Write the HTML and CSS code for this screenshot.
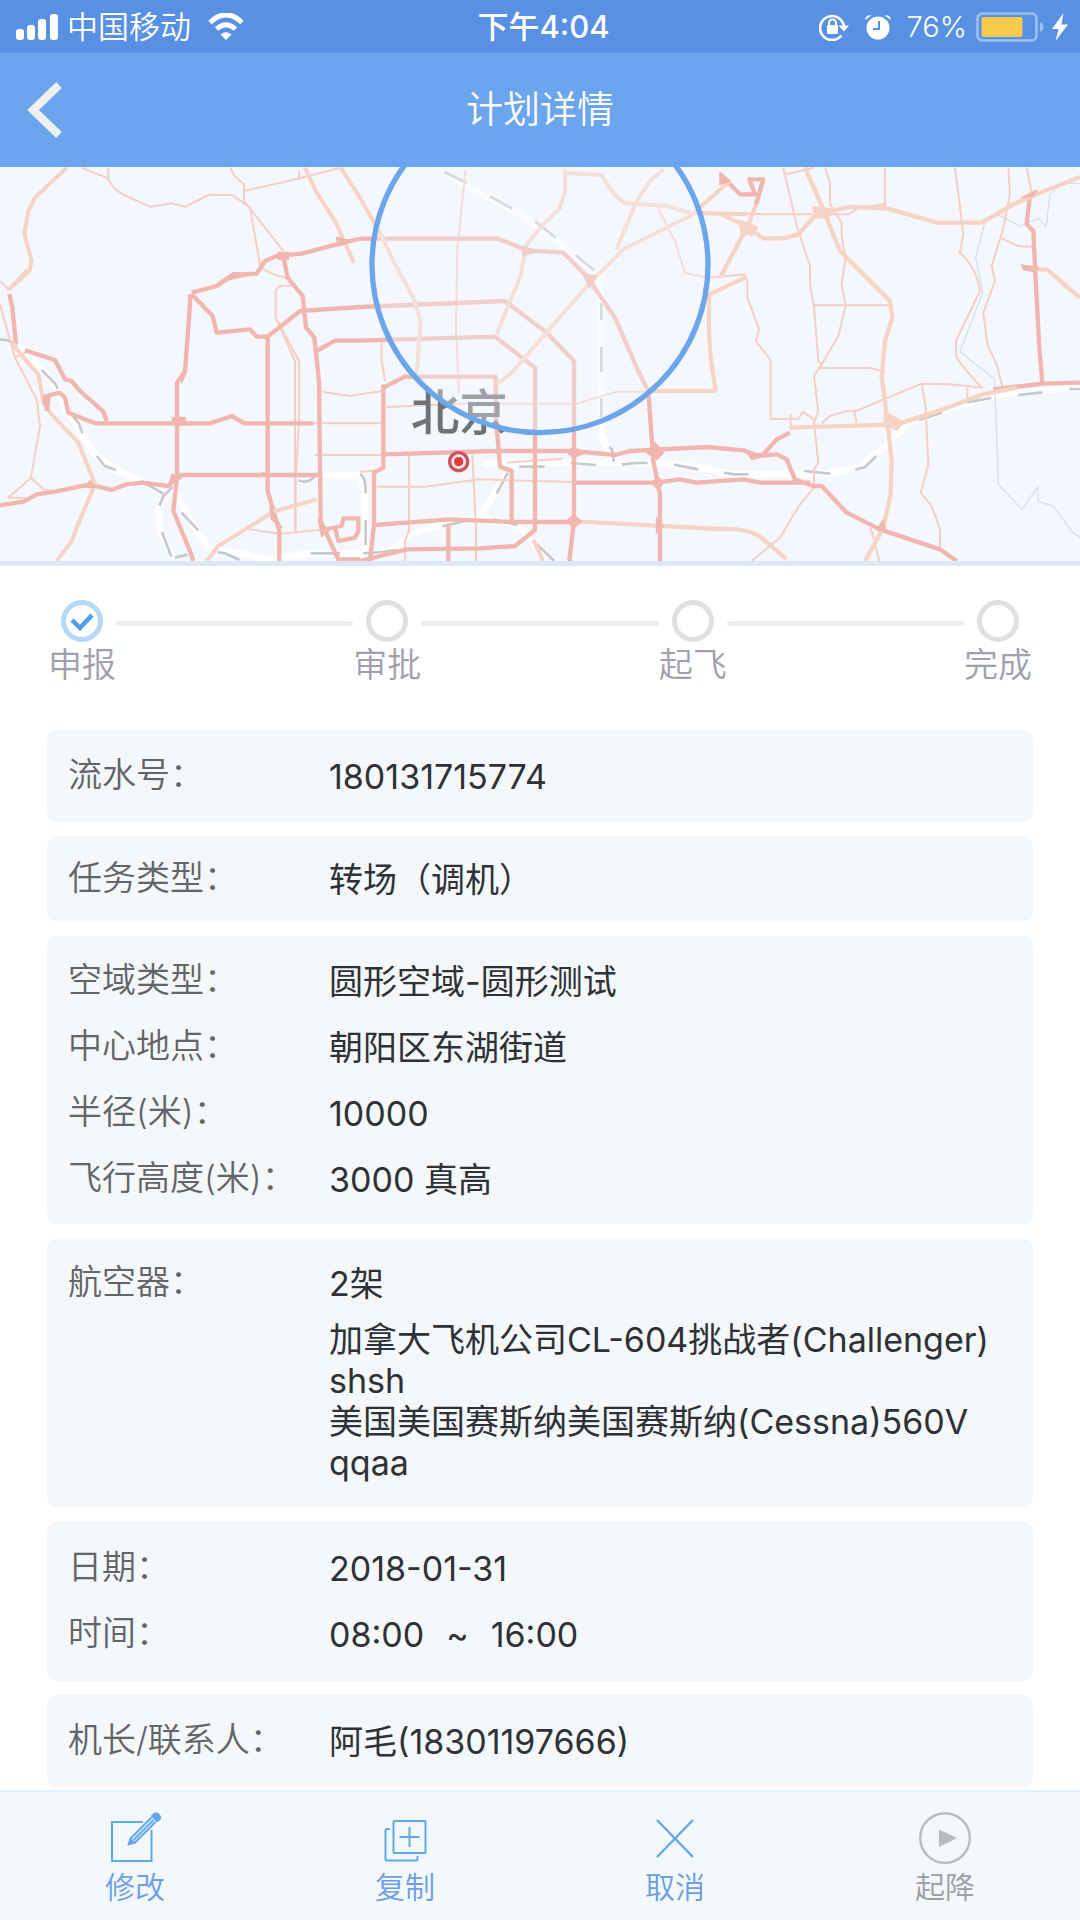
FILE: index.html
```html
<!DOCTYPE html>
<html lang="zh-CN">
<head>
<meta charset="utf-8">
<meta name="viewport" content="width=device-width, initial-scale=1">
<title>计划详情</title>
<link rel="stylesheet" href="styles.css">
</head>
<body>
<div class="status-bar">
  <div class="status-left">
    <svg class="signal" viewBox="0 0 42 26" width="42" height="26" fill="#fff" aria-hidden="true">
      <rect x="0" y="15" width="8" height="11" rx="3"/><rect x="11" y="11" width="8" height="15" rx="3"/><rect x="22" y="5" width="8" height="21" rx="3"/><rect x="34" y="0" width="8" height="26" rx="3"/>
    </svg>
    <span class="carrier">中国移动</span>
    <svg class="wifi" viewBox="0 0 36 27" width="36" height="27" aria-hidden="true">
      <path d="M2 9.500Q18-6 34 9.500M8.500 16Q18 7.500 27.500 16" fill="none" stroke="#fff" stroke-width="5"/>
      <path d="M18 27L12.500 21.500Q18 17 23.500 21.500Z" fill="#fff"/>
    </svg>
  </div>
  <time class="clock">下午4:04</time>
  <div class="status-right">
    <svg viewBox="0 0 30 28" width="30" height="28" aria-hidden="true">
      <path d="M22.500 22.500A12 12 0 1 1 25 14" fill="none" stroke="#fff" stroke-width="2.600"/>
      <path d="M19.500 12.500H30L25 18.500Z" fill="#fff"/>
      <rect x="8" y="12" width="11" height="9" rx="1" fill="#fff"/>
      <path d="M10 12.500V10a3.500 3.500 0 0 1 7 0v2.500" fill="none" stroke="#fff" stroke-width="2"/>
    </svg>
    <svg class="alarm" viewBox="0 0 26 26" width="26" height="26" aria-hidden="true">
      <circle cx="13" cy="14" r="11.500" fill="#fff"/>
      <path d="M0 6Q1 0 6.500 1.500ZM26 6Q25 0 19.500 1.500Z" fill="#fff"/>
      <path d="M14 7V15H8" fill="none" stroke="#5890e4" stroke-width="2"/>
    </svg>
    <span class="percent">76%</span>
    <svg viewBox="0 0 68 30" width="68" height="30" aria-hidden="true">
      <rect x="1.500" y="1.500" width="59" height="27" rx="5" fill="none" stroke="#9dc0f3" stroke-width="2.600"/>
      <rect x="5.500" y="5" width="41" height="20" rx="2" fill="#f6cb4b"/>
      <path d="M64 10Q67.500 11 67.500 15T64 20Z" fill="#9dc0f3"/>
    </svg>
    <svg class="bolt" viewBox="0 0 16 28" width="16" height="28" aria-hidden="true"><path d="M11.500 0L0 16H6.500L3.500 28L16 11.500H9.500Z" fill="#fff"/></svg>
  </div>
</div>

<header class="title-bar">
  <button class="back" type="button" aria-label="返回">
    <svg viewBox="0 0 36 56" width="36" height="56" aria-hidden="true"><path d="M32 3L6 28L32 53" fill="none" stroke="#f0f0f0" stroke-width="8"/></svg>
  </button>
  <h1 class="title">计划详情</h1>
</header>

<main class="content">
  <svg class="map" viewBox="0 18 3240 1182" role="img" aria-label="北京地图">
    <!-- railways -->
    <g class="rail-bed">
      <path d="M60 560L130 630L175 690L200 750L240 810L290 885L345 925L430 965L500 1000L475 1040L480 1110L520 1195M520 980L560 1060L630 1165L690 1170L800 1195L930 1177L1100 1177L1180 1165L1230 1120L1330 1090L1440 1065L1525 930M960 942H1080L1095 990V1180"/>
      <path d="M1330 35L1540 150L1660 230L1790 340L1803 420V820L1840 900M1450 905H1900L2040 910L2200 940L2480 938L2570 920L2640 870L2720 790L2860 740L3000 700L3240 680M1450 1070L1560 1095L1640 1195"/>
    </g>
    <g class="rail">
      <path d="M0 535L25 538L50 552M125 627L165 667L173 683M205 750L235 785L248 817M290 885L315 915L348 927M423 960L490 998M518 978L490 1005L478 1035M545 1055L595 1108M486 1113L514 1187M525 1190L563 1181M652 1173L675 1177L718 1196M745 941H795M590 941H665M895 958Q925 970 945 945M932 1177H1020"/>
      <path d="M1333 33L1400 66M1470 106L1537 143M1606 182L1667 230M1727 282L1782 328M1804 425V478M1804 558V633M1804 712V770M1828 858Q1841 865 1841 902M1558 917H1634M1712 906L1787 912M1866 911Q1900 904 1943 906M2022 911L2095 925M1524 935L1490 998M1080 940Q1097 945 1097 997M1097 1077V1152M1090 1177Q1140 1175 1190 1167M1327 1096L1395 1080M1480 1075L1552 1092M1610 1150L1663 1200"/>
      <path d="M2172 935L2200 940H2246M2413 930L2490 938M2566 926L2595 918L2629 885M2756 778L2825 755M2900 724L2974 711M3053 702L3128 694M3208 684H3240"/>
    </g>
    <!-- rivers -->
    <path class="river" d="M3240 68L3190 65L3150 100L3138 197L3115 172L3060 195L2990 160L2955 180L2927 290L2948 395L2880 572L2984 655L2995 970L3066 1046L3113 978L3115 1022L3160 1035L3215 1110L3240 1130"/>
    <!-- minor roads -->
    <g class="minor">
      <path d="M245 20L325 52L332 68Q350 95 395 112L450 137L515 127L557 137L625 102H697L750 140L780 310Q790 335 858 350M325 20V60M692 20Q697 45 732 70V120L850 270M732 90L900 52L1020 20M897 30V55M0 360L25 385L80 325M0 430L45 590L110 715L120 795L105 880L93 950L25 1010H75M93 950L130 985L160 990M45 590L75 575M885 374H845Q827 377 827 400V470L885 600V1110M833 480L897 600V780L887 960V1110M967 692L1050 705L1080 700M905 787H1080M945 882H1080M735 1103L840 1118L960 1107"/>
      <path d="M1080 700L1148 690M1080 787H1148M1080 882H1155M1080 932L1140 928M1145 530V600L1155 660M1160 738L1350 730L1380 728H1730L1850 692H1950M1130 977H1275L1440 955L1720 963M1227 885V1110L1215 1140V1200M1417 880L1428 1100V1200M1522 905L1688 893M1397 25L1372 260L1368 500L1377 695M1975 145L2025 240L2055 337L2130 350L2235 340L2242 360V410L2277 505L2267 540L2312 598V774H2395L2408 752L2442 775"/>
      <path d="M2350 20L2392 200L2430 315V370L2442 440L2455 600L2465 610L2442 645L2455 750L2442 785L2455 905L2442 925V970M2350 42L2440 20M2475 20L2490 65V130L2525 185V225L2537 290L2525 370L2537 435L2515 525L2465 610M2442 433H2680M2455 621H2610L2655 633M2655 20V142M2200 155L2290 160H2545L2575 142L2660 128M2865 20L2885 180L2890 220L2880 275Q2930 320 2940 390L2868 540V580Q2870 600 2945 680M3025 20L3030 100L3010 200L2975 315L2985 360L2950 455L2962 550L2990 610L3008 680M3080 20L3095 95M3005 232L3055 255L3100 257M2465 787L2490 765L2540 750H2570L2650 715L2765 668L2850 670L2950 680M2765 668L2777 740L2785 910L2762 995L2795 1035L2820 1105V1165M2902 680V720M2562 750L2570 785M2372 760V805M2442 980L2400 1030L2340 1130L2255 1200M2612 1100L2638 1200"/>
    </g>
    <!-- expressways -->
    <g class="major">
      <path d="M570 400V430L555 630L531 665V950L520 1050L570 1170L580 1200M575 395L650 375L700 342L770 338L795 300L830 285L905 278L1010 250L1080 233M850 285L863 350L908 405L918 500L943 530L957 660L962 1080L1015 1195H1080M575 400L638 465L650 515L750 505L770 527H803L900 450L1080 438M803 527V990L838 1110V1200M950 570L1005 539H1080M75 568L165 597L195 655L215 660L240 690L310 752L320 780M140 750V705L180 695L195 710L205 755L285 787H630L695 765L733 787H940M0 1033L70 1022L110 1000L165 992L270 970L335 987L380 970L425 965L505 975L535 942H960M28 400L37 440L48 550M965 1107L1025 1095L1030 1072H1075V1110L1065 1130L1015 1140L1005 1100"/>
      <path d="M1080 233H1495L1580 268L1690 275L1760 345L1845 470L1910 620L1945 690L1960 900L1980 1000V1200M1080 438L1515 420L1640 515L1722 600V1080L1708 1200M1080 539L1485 527L1605 620V1107L1545 1155L1440 1162L1220 1165L1080 1200M1150 680L1215 647H1487V760L1500 917L1535 930V1080M1150 670V920L1122 935V1090L1110 1200M1122 1092L1350 1075L1535 1083H1720M1155 880L1480 870H1720L1845 882L1890 870L2120 858L2230 868L2275 885L2330 880L2360 895L2385 955L2440 975H2465L2540 1055L2640 1105L2820 1165L2870 1200M1720 965H1970L2040 955L2090 965L2230 955L2280 965H2430M1345 1090V1200"/>
      <path d="M2260 885L2290 880L2330 835L2370 815M3090 100L3080 190L3100 210L3105 320L3118 560L3127 667M2980 685L3130 668L3240 665M2160 40L2185 65L2220 100H2265L2248 55H2290L2268 130"/>
    </g>
    <!-- secondary roads -->
    <g class="secondary">
      <path d="M200 20L105 110L85 150L73 220L95 300L88 330L27 385M38 545L50 565L115 640L130 720L150 755L235 845L285 970L230 1100L215 1140L170 1200M915 20L950 95L1005 180L1062 305M1022 20L1080 110M620 1200L655 1155L825 1050L950 1015"/>
      <path d="M1080 110L1145 225L1180 300L1240 410L1262 480L1250 640M1695 25V90L1680 140L1630 190L1580 250L1560 350L1530 420L1490 520M1695 35L1805 42Q1850 120 1880 127L2000 135L2070 155L2240 160M1490 670L1535 635L1770 365L1870 265L2070 165L2190 60M1850 265L1910 120L1950 60L1990 25M2268 130L2240 205M2235 350L2128 400L2127 460Q2125 580 2148 690M1940 690H2150M1600 1137L1630 1200"/>
      <path class="wide" d="M2160 157L2245 200L2290 232H2350L2395 220L2450 158L2550 138L2660 142L2810 185H2945L3040 130L3120 95L3240 48M2415 20L2470 145L2520 270L2670 420L2677 470L2655 540L2645 650L2660 760L2675 900L2672 1000L2650 1100L2595 1200M2240 200L2160 350M2370 800L2690 790L2830 745L2950 700L3050 680M3105 325H3140L3240 410M1740 1082L2160 1104Q2250 1100 2290 1135L2360 1195"/>
    </g>
    <g class="junction">
      <path d="M835 275H865V295H835ZM1010 230L1055 240L1015 255ZM518 770H555V792H518ZM790 935L815 945H785ZM555 625L545 665L560 630ZM270 960L290 980L255 978ZM515 940L545 950L510 970ZM810 1040L845 1100L815 1075ZM955 1075L985 1110L965 1125ZM655 365L700 335L765 338L700 352ZM130 705L150 700L145 750L130 730Z"/>
      <path d="M1720 860L1755 875L1720 890L1700 873ZM1965 845L1990 875L1970 895L1940 875ZM1720 1062L1745 1082L1720 1100L1700 1080ZM1975 950L1990 965L1975 985L1955 965ZM1970 1070L1990 1095L1970 1115ZM2240 870L2290 885L2255 895ZM1750 340L1790 345L1770 380ZM1565 255L1610 272L1570 283ZM2650 1078L2655 1110L2630 1105ZM3065 312L3115 320L3105 332L3070 325ZM3065 110L3110 88L3100 105ZM2160 35L2190 60L2160 70Z"/>
    </g>
    <path class="interchange" d="M2220 180L2270 200L2255 222L2225 215ZM2440 140L2490 145L2485 170L2450 168ZM2655 755L2710 785L2690 805L2655 790Z"/>
    <text class="city" x="1232" y="808">北京</text>
    <circle cx="1376" cy="902" r="27" fill="#f9e9ec" stroke="#c9555d" stroke-width="10"/>
    <circle cx="1376" cy="902" r="14" fill="#e03c40"/>
    <circle class="airspace" cx="1620" cy="311" r="504"/>
  </svg>

  <ol class="steps">
    <li class="step">
      <svg viewBox="0 0 42 42" width="42" height="42" aria-hidden="true"><circle cx="21" cy="21" r="18.500" fill="#fff" stroke="#b3d8f8" stroke-width="5"/><path d="M11 20L19 28L31 15" fill="none" stroke="#4fa0ea" stroke-width="4.500"/></svg>
      <span>申报</span>
    </li>
    <li class="track" aria-hidden="true"></li>
    <li class="step"><i class="dot"></i><span>审批</span></li>
    <li class="track" aria-hidden="true"></li>
    <li class="step"><i class="dot"></i><span>起飞</span></li>
    <li class="track" aria-hidden="true"></li>
    <li class="step"><i class="dot"></i><span>完成</span></li>
  </ol>

  <div class="cards">
    <dl class="card">
      <div class="row"><dt>流水号：</dt><dd>180131715774</dd></div>
    </dl>
    <dl class="card card-compact">
      <div class="row"><dt>任务类型：</dt><dd>转场（调机）</dd></div>
    </dl>
    <dl class="card card-group">
      <div class="row"><dt>空域类型：</dt><dd>圆形空域-圆形测试</dd></div>
      <div class="row"><dt>中心地点：</dt><dd>朝阳区东湖街道</dd></div>
      <div class="row"><dt>半径(米)：</dt><dd>10000</dd></div>
      <div class="row"><dt>飞行高度(米)：</dt><dd>3000 真高</dd></div>
    </dl>
    <dl class="card card-group">
      <div class="row"><dt>航空器：</dt><dd>2架</dd>
        <dd class="aircraft">加拿大飞机公司CL-604挑战者(Challenger)<br>shsh<br>美国美国赛斯纳美国赛斯纳(Cessna)560V<br>qqaa</dd></div>
    </dl>
    <dl class="card card-schedule">
      <div class="row"><dt>日期：</dt><dd>2018-01-31</dd></div>
      <div class="row"><dt>时间：</dt><dd class="period"><span>08:00</span><span>~</span><span>16:00</span></dd></div>
    </dl>
    <dl class="card">
      <div class="row"><dt>机长/联系人：</dt><dd>阿毛(18301197666)</dd></div>
    </dl>
  </div>
</main>

<nav class="actions">
  <button class="action" type="button">
    <svg viewBox="0 0 52 52" width="52" height="52" fill="none" stroke="#5fa8ea" stroke-width="2" aria-hidden="true">
      <path d="M34 10H3V49H42.500V18"/><path d="M42.500 5.500L22 26L20 32L26 30.500L46.500 10M24.500 28L44.500 8"/><path d="M20 32L21.500 27L25 30.500Z" fill="#5fa8ea"/><path d="M43 4Q47-1 50 3T48 9Z" fill="#5fa8ea"/>
    </svg>
    <span>修改</span>
  </button>
  <button class="action" type="button">
    <svg viewBox="0 0 52 52" width="52" height="52" fill="none" stroke="#5fa8ea" stroke-width="2" aria-hidden="true">
      <rect x="14.500" y="9" width="32" height="32" rx="1"/><path d="M11 17H8Q6.500 17 6.500 18.500V47Q6.500 48.500 8 48.500H37Q38.500 48.500 38.500 47V44M20.500 25H40.500M30.500 15V35"/>
    </svg>
    <span>复制</span>
  </button>
  <button class="action" type="button">
    <svg viewBox="0 0 52 52" width="52" height="52" fill="none" stroke="#5fa8ea" stroke-width="2.400" aria-hidden="true"><path d="M8 8L44 45M44 8L8 45"/></svg>
    <span>取消</span>
  </button>
  <button class="action action-off" type="button" disabled>
    <svg viewBox="0 0 52 52" width="52" height="52" aria-hidden="true"><circle cx="26" cy="26" r="24.800" fill="none" stroke="#b9bcbf" stroke-width="2.400"/><path d="M20 17.500L38 26L20 35Z" fill="#b9bcbf"/></svg>
    <span>起降</span>
  </button>
</nav>
</body>
</html>
```
FILE: styles.css
```css
* { box-sizing: border-box; }

body {
  margin: 0;
  min-height: 100vh;
  display: flex;
  flex-direction: column;
  background: #fff;
  color: #2e3135;
  font-family: Inter, "Noto Sans CJK SC", sans-serif;
  font-size: 34px;
}

button {
  margin: 0;
  padding: 0;
  border: 0;
  background: none;
  font: inherit;
}

svg { display: block; flex: none; }

/* status bar */
.status-bar {
  display: grid;
  grid-template-columns: 1fr auto 1fr;
  align-items: center;
  height: 53px;
  padding: 0 12px 0 16px;
  background: #5890e4;
  color: #fff;
  font-size: 31px;
  line-height: 53px;
}
.status-left, .status-right { display: flex; align-items: center; }
.carrier { margin: 0 17px 0 9px; font-weight: 350; }
.clock { padding-left: 3px; font-weight: 500; }
.status-right { justify-content: flex-end; }
.alarm { margin: 0 16px; }
.percent { margin-right: 9px; font-size: 29px; font-weight: 350; }
.bolt { margin-left: 8px; }

/* title bar */
.title-bar {
  display: grid;
  grid-template-columns: 1fr auto 1fr;
  align-items: center;
  height: 114px;
  padding: 0 27px;
  background: #6ba5ee;
  color: #fff;
}
.back { justify-self: start; }
.title { margin: 0; font-size: 37px; font-weight: 350; line-height: 50px; }

/* map */
.map {
  width: 100%;
  background: #f4f7fe;
  border-bottom: 5px solid #dce8f7;
  box-sizing: content-box;
}
.map path { fill: none; stroke-linejoin: round; }
.rail-bed { stroke: #fff; stroke-width: 20; }
.rail { stroke: #c6c9cc; stroke-width: 8; }
.map .river { stroke: #d6dfea; stroke-width: 4; }
.minor { stroke: #f5cfc2; stroke-width: 6; }
.secondary { stroke: #f6d3c2; stroke-width: 12; }
.wide { stroke-width: 13; }
.major { stroke: #f1b7ae; stroke-width: 13; }
.map .junction path { fill: #f1b7ae; stroke: #f1b7ae; stroke-width: 5; }
.map .interchange { fill: #f6d3c2; stroke: #f6d3c2; stroke-width: 8; }
.city { font-size: 146px; font-weight: 500; fill: #6f7173; }
.airspace { fill: rgba(244, 248, 255, .36); stroke: #6ba5ea; stroke-width: 16; }

/* progress */
.steps {
  display: flex;
  margin: 0;
  padding: 34px 48px 42px;
  list-style: none;
}
.step {
  display: flex;
  flex-direction: column;
  align-items: center;
  color: #a09fac;
  font-weight: 350;
  line-height: 46px;
}
.dot {
  width: 42px;
  height: 42px;
  border: 5px solid #e0e0e0;
  border-radius: 50%;
}
.track {
  flex: 1;
  height: 5px;
  margin-top: 21px;
  border-radius: 3px;
  background: #ececec;
}

/* detail cards */
.cards {
  display: flex;
  flex-direction: column;
  gap: 14px;
  padding: 0 47px 3px;
}
.card {
  margin: 0;
  padding: 13px 21px;
  border-radius: 10px;
  background: #f5f8fb;
}
.card-compact { padding-block: 10px; }
.card-group { padding-block: 12px; }
.card-schedule { padding-block: 14px; }
.row {
  display: grid;
  grid-template-columns: 261px 1fr;
}
.row dt {
  color: #626467;
  font-weight: 350;
  line-height: 64px;
  white-space: nowrap;
}
.row dd {
  margin: 0;
  padding-top: 2px;
  line-height: 64px;
}
.row .aircraft {
  grid-column: 2;
  padding: 3px 0 12px;
  line-height: 41px;
}
.row .period { display: flex; gap: 22px; }

/* bottom actions */
.actions {
  position: sticky;
  bottom: 0;
  display: grid;
  grid-template-columns: repeat(4, 1fr);
  margin-top: auto;
  padding: 20px 0 14px;
  border-top: 2px solid #e4f0fb;
  background: #f5f8fb;
}
.action {
  display: flex;
  flex-direction: column;
  align-items: center;
  gap: 5px;
  color: #699fe6;
  font-size: 30px;
  font-weight: 350;
  line-height: 37px;
}
.action-off { color: #9a9da5; }
```
